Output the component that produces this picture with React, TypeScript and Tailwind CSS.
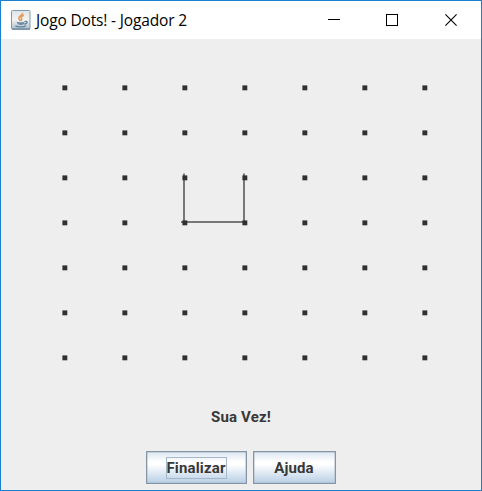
const columns = [0, 1, 2, 3, 4, 5, 6];
const rows = [0, 1, 2, 3, 4, 5, 6];

function JavaIcon() {
  return (
    <svg width="20" height="20" viewBox="0 0 20 20" className="shrink-0">
      <defs>
        <linearGradient id="tile" x1="0" y1="0" x2="0" y2="1">
          <stop offset="0" stopColor="#dde5eb" />
          <stop offset="0.5" stopColor="#f4f4f2" />
          <stop offset="1" stopColor="#a9bdce" />
        </linearGradient>
      </defs>
      <rect x="0.5" y="0.5" width="18.5" height="18.5" rx="1" fill="url(#tile)" stroke="#8199ad" />
      <path d="M1 19.2H19" stroke="#5d7991" />
      <path d="M11.5 2.8C12.5 5 7.6 5.6 7.8 8.2C8 9.3 9 10 9.3 11M13 5.2C9.8 6.3 9.6 7.4 10.6 8.7C11 9.5 10.6 10.2 9.9 11" fill="none" stroke="#e79a58" strokeWidth="1.6" />
      <path d="M5.5 11.7C8 12.5 11 12.5 13.5 11.7L12.8 14.2C11 15.2 8.5 15.2 6.8 14.2Z" fill="#6b8ba6" />
      <path d="M13.5 11.5C17 10.5 17 13.5 13.2 14.2M4.5 15.7C6 17.3 13 17.3 15 15.7" fill="none" stroke="#638399" strokeWidth="1.3" />
    </svg>
  );
}

function TitleBar() {
  return (
    <header className="flex h-[38px] shrink-0 items-center bg-white pl-[10px]">
      <JavaIcon />
      <h1 className="ml-[5px] w-[160px] whitespace-nowrap font-['Open_Sans',sans-serif] text-[15.5px] font-normal leading-5 tracking-[-0.16px] text-black">
        Jogo Dots! - Jogador 2
      </h1>
      <svg width="129" height="12" viewBox="0 0 129 12" className="ml-auto mr-[24px]" fill="none" stroke="#000">
        <path d="M0 5.5H12" />
        <rect x="58.5" y="0.5" width="11" height="11" />
        <path d="M117.4 0.4L128.6 11.6M128.6 0.4L117.4 11.6" strokeWidth="1.1" />
      </svg>
    </header>
  );
}

function Board() {
  return (
    <svg width="480" height="352" viewBox="1 39 480 352" className="shrink-0">
      <path d="M184 173.5V222M244 173.5V222M181 222H245" fill="none" stroke="#777" strokeWidth="2" />
      {rows.map((r) =>
        columns.map((c) => (
          <rect key={`${r}-${c}`} x={62.4 + c * 60} y={85.4 + r * 45} width="4.9" height="4.9" fill="#303030" />
        )),
      )}
    </svg>
  );
}

const buttonStyle =
  "flex h-[33px] items-center justify-center border border-[#8495a6] bg-[linear-gradient(to_bottom,#dce7f1_0%,#ffffff_32%,#ffffff_40%,#b8cfe5_100%)] shadow-[inset_0_0_0_0.5px_#a9b8c6]";

export default function App() {
  return (
    <main className="flex h-[491px] w-[482px] flex-col overflow-hidden border border-[#1b7fd0] bg-[#eeeeee] font-[Roboto,sans-serif] text-[15px] font-bold leading-5 text-[#383838]">
      <TitleBar />
      <Board />
      <p className="mt-[16px] text-center tracking-[0.15px]">Sua Vez!</p>
      <div className="mt-[24px] flex justify-center gap-[6px] pr-px">
        <button className={`${buttonStyle} w-[101px]`}>
          <span className="flex h-[22px] w-[61px] items-center justify-center border border-[#a3b8cc] tracking-[0.15px]">Finalizar</span>
        </button>
        <button className={`${buttonStyle} w-[83px]`}>
          <span className="tracking-[0.15px]">Ajuda</span>
        </button>
      </div>
    </main>
  );
}
